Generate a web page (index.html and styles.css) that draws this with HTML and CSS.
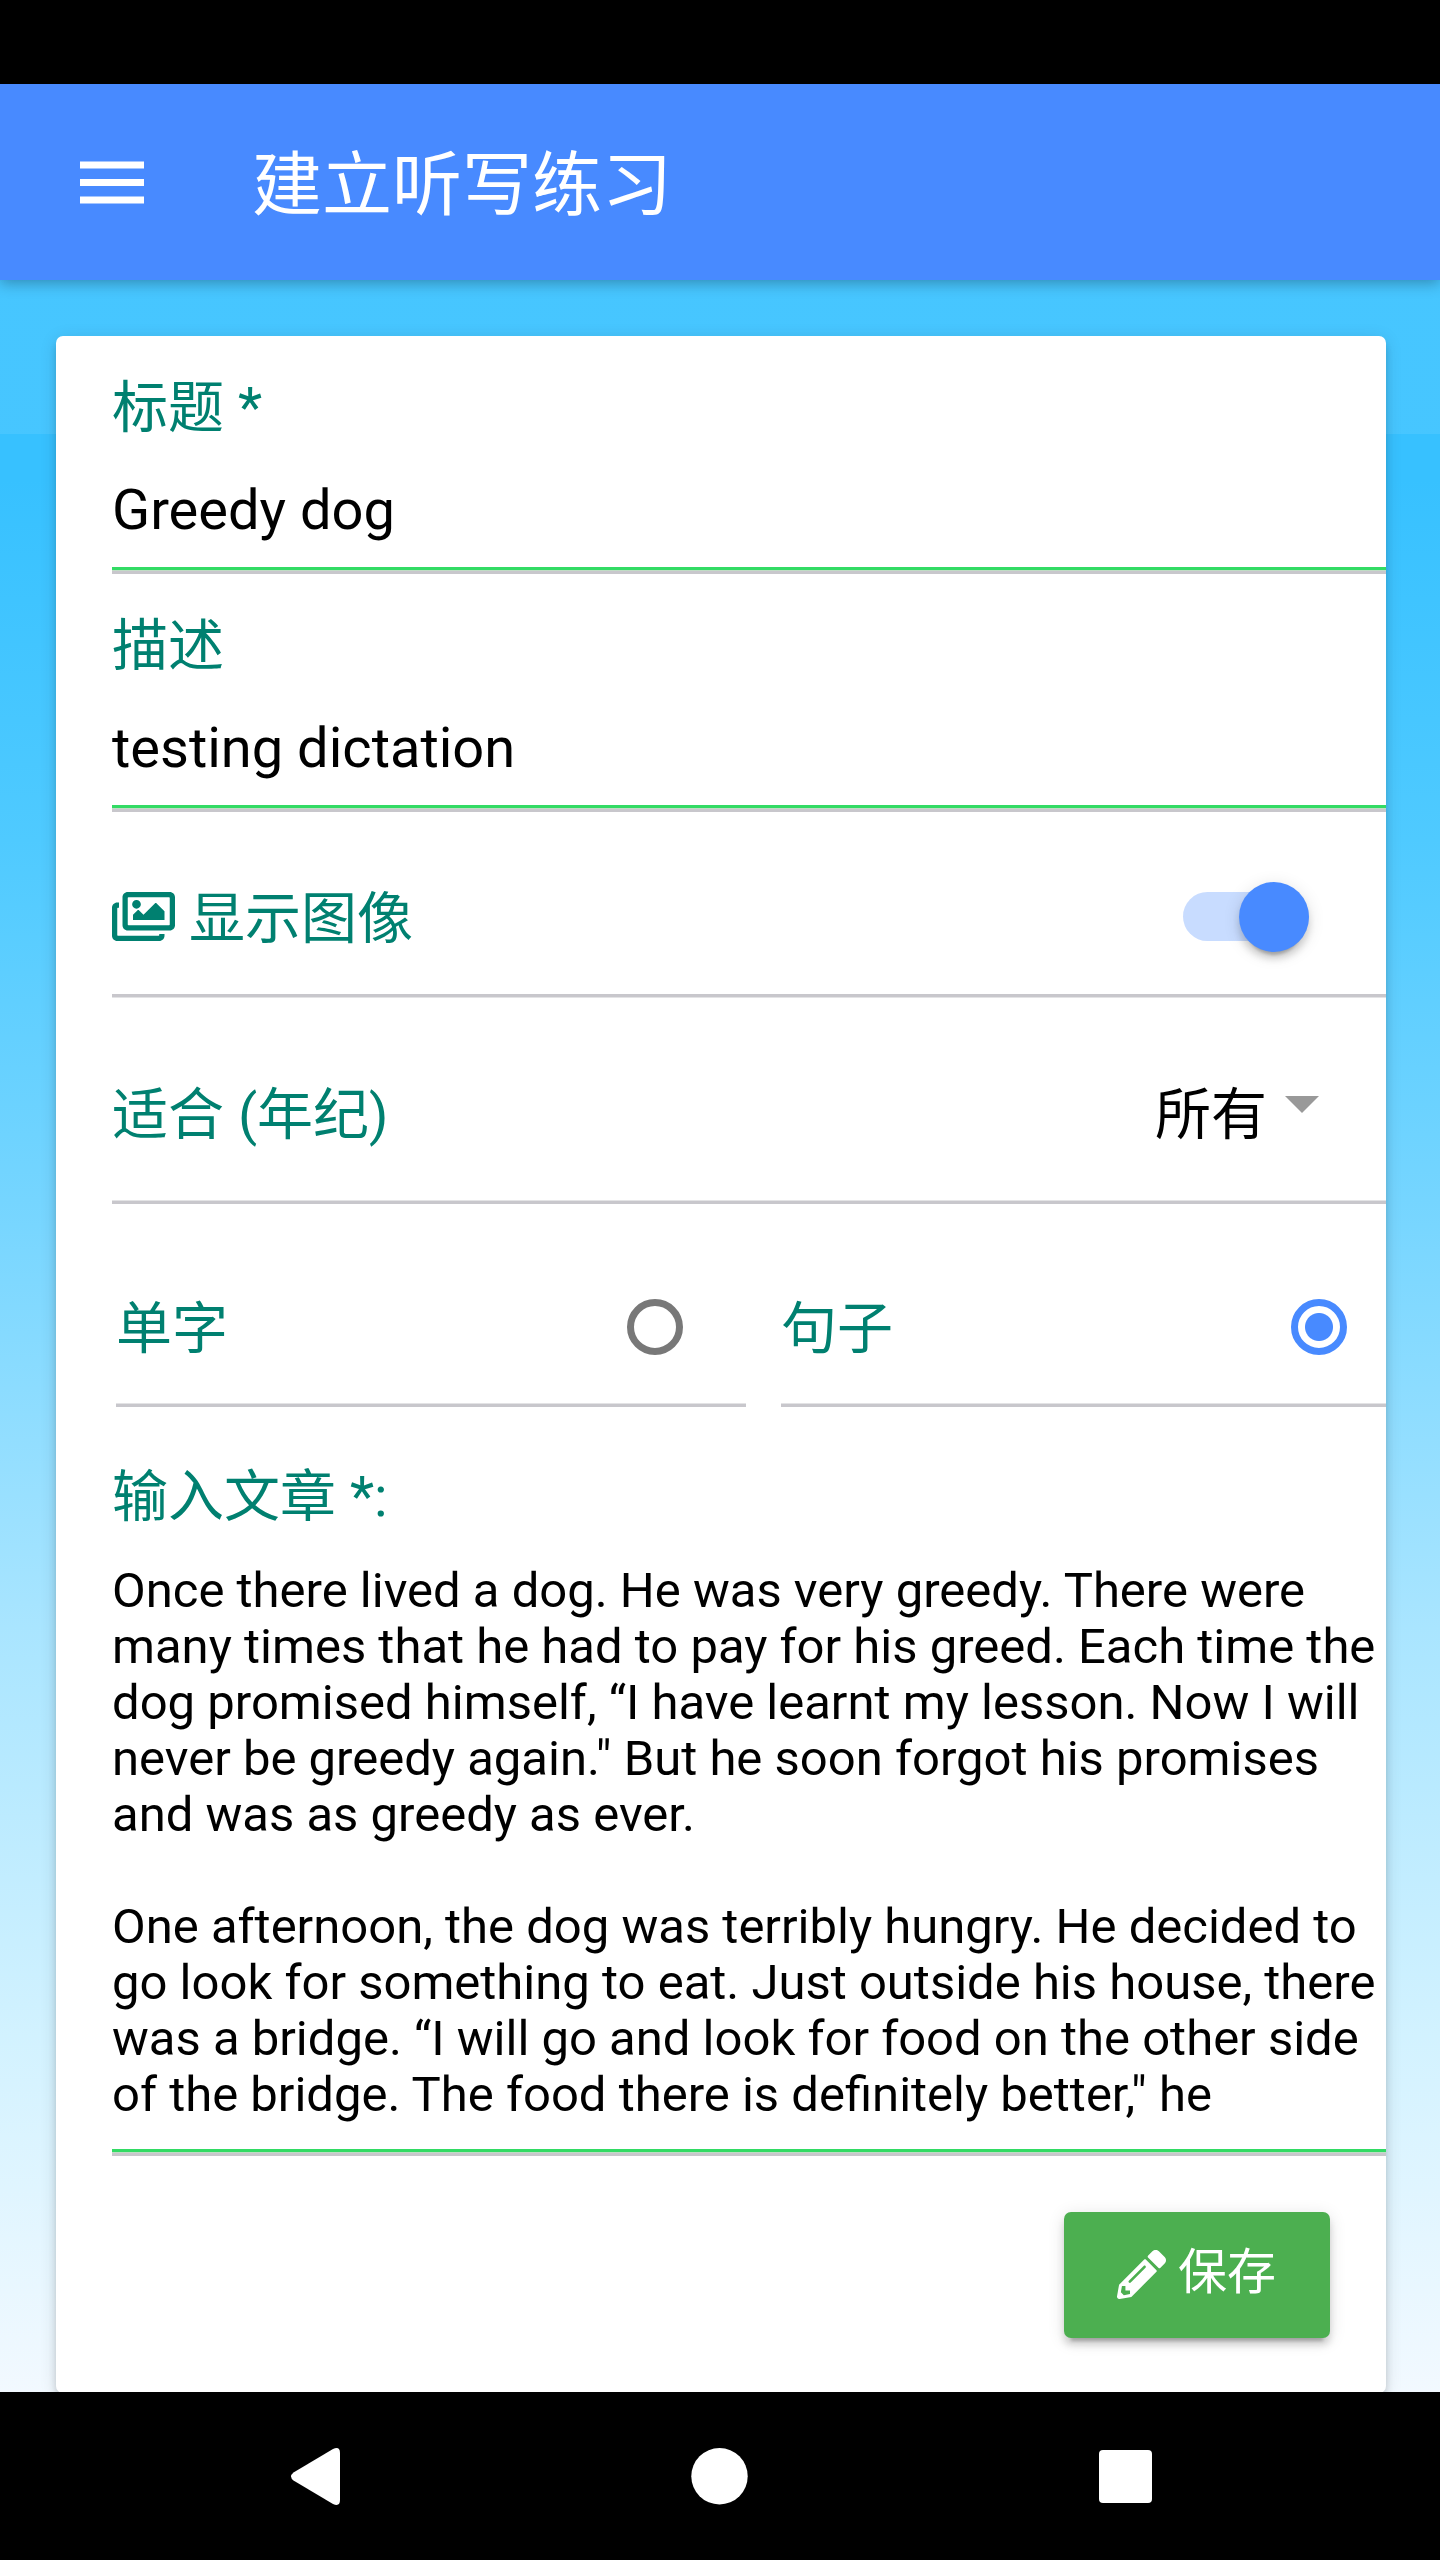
FILE: index.html
```html
<!DOCTYPE html>
<html lang="zh-CN">
<head>
<meta charset="utf-8">
<title>建立听写练习</title>
<link rel="stylesheet" href="styles.css">
</head>
<body>
<div class="status-bar"></div>
<header class="toolbar">
  <svg class="menu-icon" viewBox="0 0 64 43"><path fill="#fff" d="M0 .5h64v7H0zM0 18h64v7H0zM0 35.500h64v7H0z"/></svg>
  <h1 class="toolbar-title">建立听写练习</h1>
</header>
<main class="content">
  <section class="card">
    <div class="field">
      <label class="label">标题 *</label>
      <div class="input">Greedy dog</div>
    </div>
    <div class="field">
      <label class="label">描述</label>
      <div class="input">testing dictation</div>
    </div>
    <div class="row toggle-row">
      <svg class="images-icon" viewBox="0 32 576 448"><path fill="currentColor" d="M480 416v16c0 26.510-21.490 48-48 48H48c-26.510 0-48-21.490-48-48V176c0-26.510 21.490-48 48-48h16v48H54a6 6 0 0 0-6 6v244a6 6 0 0 0 6 6h372a6 6 0 0 0 6-6v-10h48zm42-336H150a6 6 0 0 0-6 6v244a6 6 0 0 0 6 6h372a6 6 0 0 0 6-6V86a6 6 0 0 0-6-6zm6-48c26.510 0 48 21.490 48 48v256c0 26.510-21.490 48-48 48H144c-26.510 0-48-21.490-48-48V80c0-26.510 21.490-48 48-48h384zM264 144c0 22.091-17.909 40-40 40s-40-17.909-40-40 17.909-40 40-40 40 17.909 40 40zm-72 96l39.515-39.515c4.686-4.686 12.284-4.686 16.971 0L288 240l103.515-103.515c4.686-4.686 12.284-4.686 16.971 0L480 208v80H192v-48z"/></svg>
      <span class="label">显示图像</span>
      <span class="toggle"><span class="knob"></span></span>
    </div>
    <div class="row select-row">
      <span class="label">适合 (年纪)</span>
      <span class="select-value">所有</span>
      <span class="caret"></span>
    </div>
    <div class="radio-group">
      <div class="row radio-row">
        <span class="label">单字</span><span class="radio"></span>
      </div>
      <div class="row radio-row">
        <span class="label">句子</span><span class="radio checked"></span>
      </div>
    </div>
    <div class="field article">
      <label class="label">输入文章 *:</label>
      <div class="textarea">Once there lived a dog. He was very greedy. There were
many times that he had to pay for his greed. Each time the
dog promised himself, “I have learnt my lesson. Now I will
never be greedy again." But he soon forgot his promises
and was as greedy as ever.

One afternoon, the dog was terribly hungry. He decided to
go look for something to eat. Just outside his house, there
was a bridge. “I will go and look for food on the other side
of the bridge. The food there is definitely better," he</div>
    </div>
    <div class="actions">
      <button class="save" type="button">
        <svg class="pencil" viewBox="0 0 512 512"><path fill="#fff" d="M497.900 142.100l-46.100 46.100c-4.700 4.700-12.300 4.700-17 0l-111-111c-4.700-4.700-4.700-12.300 0-17l46.100-46.100c18.700-18.700 49.100-18.700 67.900 0l60.100 60.100c18.800 18.700 18.800 49.100 0 67.900zM284.200 99.800L21.600 362.400.4 483.900c-2.900 16.400 11.400 30.600 27.800 27.800l121.500-21.300 262.600-262.600c4.700-4.700 4.700-12.300 0-17l-111-111c-4.800-4.700-12.400-4.700-17.100 0zM124.100 339.900c-5.500-5.500-5.500-14.300 0-19.800l154-154c5.500-5.500 14.300-5.500 19.800 0s5.500 14.300 0 19.800l-154 154c-5.500 5.500-14.300 5.500-19.800 0zM88 424h48v36.300l-64.500 11.300-31.100-31.100L51.700 376H88v48z"/></svg>
        <span>保存</span>
      </button>
    </div>
  </section>
</main>
<nav class="nav-bar">
  <svg viewBox="0 0 49 57"><path fill="#fff" d="M2.500 24.500L42 1Q49-2 49 5v47q0 7-7 4L2.500 32.500q-5-4 0-8z"/></svg>
  <svg viewBox="0 0 57 57"><circle cx="28.500" cy="28.200" r="28.200" fill="#fff"/></svg>
  <svg viewBox="0 0 53 53"><rect width="53" height="53" rx="4" fill="#fff"/></svg>
</nav>
</body>
</html>
```
FILE: styles.css
```css
* { box-sizing: border-box; }
body {
  margin: 0;
  width: 1440px;
  height: 2560px;
  display: flex;
  flex-direction: column;
  overflow: hidden;
  background: #000;
  color: #000;
  font-family: Roboto, "Noto Sans CJK SC", sans-serif;
  font-size: 56px;
}
svg { display: block; flex: none; }
.status-bar { height: 84px; flex: none; }
.toolbar {
  position: relative;
  z-index: 1;
  height: 196px;
  flex: none;
  display: flex;
  align-items: center;
  padding-left: 80px;
  background: #488aff;
  box-shadow: 0 3px 14px rgba(0, 0, 0, .3);
}
.menu-icon { width: 64px; height: 43px; }
.toolbar-title {
  margin: 0 0 0 108px;
  padding-top: 7px;
  font-size: 70px;
  line-height: 84px;
  font-weight: 400;
  color: #fff;
}
.content {
  height: 2112px;
  flex: none;
  overflow: hidden;
  padding: 56px 54px 0 56px;
  background:
    linear-gradient(rgba(255, 255, 255, .08), rgba(255, 255, 255, .08)) 0 0 / 100% 154px no-repeat,
    linear-gradient(#37c1ff 0, #37c1ff 200px, #4fcaff 560px, #75d5ff 920px, #a9e5ff 1348px, #d2f2ff 1756px, #f2f9ff 2112px);
}
.card {
  height: 2057px;
  padding: 0 0 0 56px;
  background: #fff;
  border-radius: 7px;
  overflow: hidden;
  box-shadow: 0 7px 7px rgba(0, 0, 0, .14), 0 10px 3px -7px rgba(0, 0, 0, .2), 0 3px 17px rgba(0, 0, 0, .12);
}
.label { color: #008070; line-height: 66px; white-space: pre; }
.field {
  height: 238px;
  padding-top: 39px;
  border-bottom: 3px solid #c8c7cc;
  display: flex;
  flex-direction: column;
}
.input {
  flex: 1;
  padding-top: 36px;
  line-height: 66px;
  border-bottom: 3px solid #32db64;
  margin-bottom: 1px;
  box-shadow: 0 1px #c0dcc5;
}
.row {
  display: flex;
  align-items: center;
  border-bottom: 3px solid #c8c7cc;
  box-shadow: inset 0 -1px #e3e3e5;
}
.row .label { padding-top: 4px; }
.toggle-row { height: 185px; padding: 27px 77px 0 0; box-shadow: 0 1px #e3e3e5; }
.images-icon { width: 63px; height: 49px; margin-right: 14px; color: #008070; }
.toggle {
  width: 126px;
  height: 49px;
  margin-left: auto;
  border-radius: 25px;
  background: #c8dcff;
  display: flex;
  align-items: center;
  justify-content: flex-end;
}
.knob {
  width: 70px;
  height: 70px;
  flex: none;
  border-radius: 50%;
  background: #488aff;
  box-shadow: 0 7px 7px rgba(0, 0, 0, .14), 0 10px 3px -7px rgba(0, 0, 0, .2), 0 3px 17px rgba(0, 0, 0, .12);
}
.select-row { height: 207px; padding: 28px 67px 0 0; }
.select-value { margin-left: auto; padding-top: 4px; line-height: 66px; }
.caret {
  margin: -18px 0 0 18px;
  border: 17.5px solid transparent;
  border-top-color: #999;
  border-bottom: 0;
}
.radio-group { display: grid; grid-template-columns: 630px 1fr; gap: 35px; margin-left: 4px; }
.radio-row { height: 203px; padding: 45px 63px 0 0; justify-content: space-between; }
.radio-row:last-child { padding-right: 39px; }
.radio {
  width: 56px;
  height: 56px;
  border: 7px solid #787878;
  border-radius: 50%;
}
.radio.checked {
  border-color: #488aff;
  background: radial-gradient(circle, #488aff 13.5px, #fff 14.5px);
}
.article { height: 749px; padding-top: 57px; }
.textarea {
  flex: 1;
  padding-top: 33px;
  font-size: 49px;
  line-height: 56px;
  white-space: pre;
  border-bottom: 3px solid #32db64;
  margin-bottom: 1px;
  box-shadow: 0 1px #c0dcc5;
}
.actions { display: flex; justify-content: flex-end; padding: 56px 56px 0 0; }
.save {
  width: 266px;
  height: 126px;
  padding: 0 0 2px 53px;
  display: flex;
  align-items: center;
  gap: 12px;
  border: 0;
  border-radius: 7px;
  background: #4caf50;
  color: #fff;
  font: 49px/56px Roboto, "Noto Sans CJK SC", sans-serif;
  box-shadow: 0 7px 7px rgba(0, 0, 0, .14), 0 10px 3px -7px rgba(0, 0, 0, .2), 0 3px 17px rgba(0, 0, 0, .12);
}
.save span { padding-bottom: 2px; }
.pencil { width: 49px; height: 49px; }
.nav-bar {
  height: 168px;
  flex: none;
  display: flex;
  align-items: center;
  justify-content: space-between;
  padding: 0 288px 0 291px;
}
.nav-bar svg { height: 57px; }
.nav-bar svg:nth-child(1) { width: 49px; }
.nav-bar svg:nth-child(2) { width: 57px; }
.nav-bar svg:nth-child(3) { width: 53px; height: 53px; }
```
